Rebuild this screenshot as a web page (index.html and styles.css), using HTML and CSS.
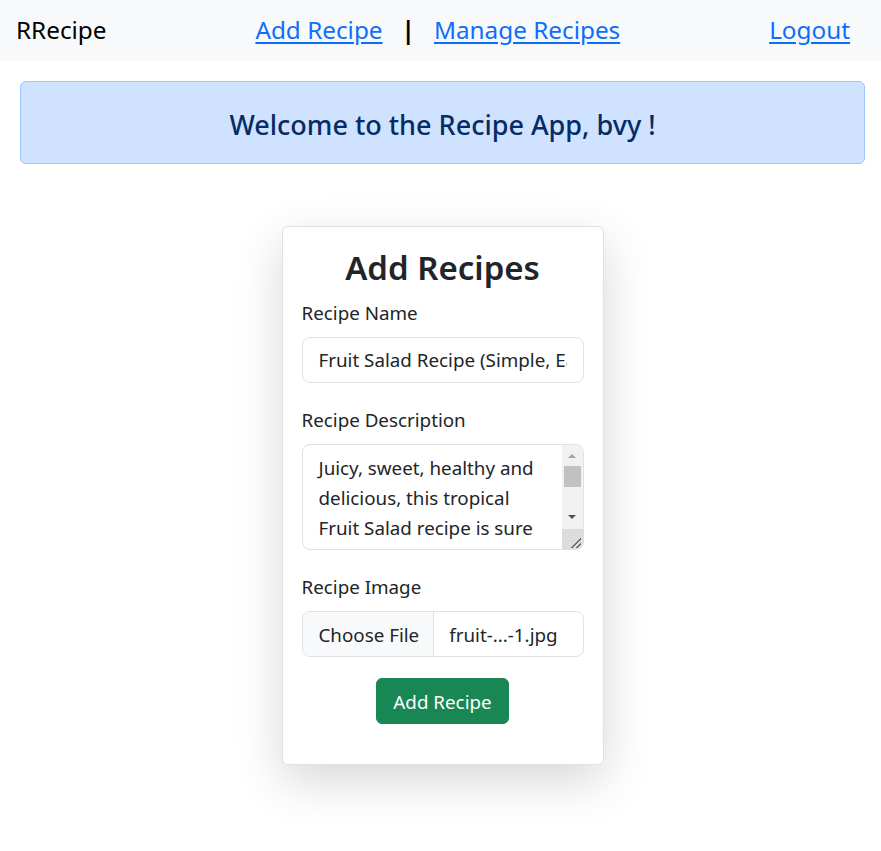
FILE: index.html
```html
<!DOCTYPE html>
<html lang="en">
<head>
<meta charset="utf-8">
<title>RRecipe</title>
<link rel="stylesheet" href="styles.css">
</head>
<body>
<nav class="navbar">
  <span class="brand">RRecipe</span>
  <div class="nav-links">
    <a href="#" class="nav-link">Add Recipe</a>
    <span class="sep">|</span>
    <a href="#" class="nav-link">Manage Recipes</a>
  </div>
  <a href="#" class="nav-link">Logout</a>
</nav>
<div class="alert">Welcome to the Recipe App, bvy !</div>
<main class="page">
  <form class="card">
    <h2 class="card-title">Add Recipes</h2>
    <div class="group">
      <label class="form-label" for="name">Recipe Name</label>
      <input class="form-control" id="name" type="text" value="Fruit Salad Recipe (Simple, Easy and Delicious)">
    </div>
    <div class="group">
      <label class="form-label" for="desc">Recipe Description</label>
      <div class="textarea-wrap">
        <textarea class="textarea" id="desc">Juicy, sweet, healthy and delicious, this tropical Fruit Salad recipe is sure to be a hit at any gathering. Made with fresh seasonal fruits like mango, pineapple, kiwi, strawberries, blueberries and grapes, all tossed together in a light honey lime dressing with a hint of fresh mint.</textarea>
        <div class="scrollbar" aria-hidden="true">
          <span class="sb-btn sb-up"></span>
          <span class="sb-track"><span class="sb-thumb"></span></span>
          <span class="sb-btn sb-down"></span>
          <span class="sb-corner"></span>
        </div>
      </div>
    </div>
    <div class="group">
      <label class="form-label">Recipe Image</label>
      <div class="file-input">
        <span class="file-btn">Choose File</span>
        <span class="file-name">fruit-...-1.jpg</span>
      </div>
    </div>
    <div class="actions">
      <button type="button" class="btn-success">Add Recipe</button>
    </div>
  </form>
</main>
</body>
</html>
```

FILE: styles.css
```css
* { box-sizing: border-box; }
html, body { margin: 0; padding: 0; }
body {
  font-family: "Noto Sans", "Open Sans", sans-serif;
  color: #212529;
  background: #fff;
}
.navbar {
  height: 61px;
  background: #f8f9fa;
  display: flex;
  align-items: center;
  justify-content: space-between;
  padding: 0 31px 2px 16px;
  font-size: 24.3px;
}
.brand { color: #000; }
.nav-links { display: flex; align-items: center; gap: 19px; }
.nav-link { color: #0d6efd; text-decoration: underline; text-underline-offset: 3px; }
.sep { color: #000; font-weight: 700; }
.alert {
  margin: 20px 16px 0 20px;
  height: 83px;
  background: #cfe2ff;
  border: 1px solid #9ec5fe;
  border-radius: 6px;
  color: #052c65;
  font-size: 27px;
  font-weight: 500;
  display: flex;
  align-items: center;
  justify-content: center;
  padding-top: 3px;
}
.page { display: flex; justify-content: center; padding: 62px 0 90px; }
.card {
  width: 322px;
  background: #fff;
  border: 1px solid #dee2e6;
  border-radius: 6px;
  box-shadow: 0 1rem 3rem rgba(0,0,0,.16);
  padding: 19px 19px 40px;
  margin-left: 4px;
}
.card-title {
  margin: 0 0 8px;
  text-align: center;
  font-size: 33px;
  line-height: 44px;
  font-weight: 600;
}
.group { margin-bottom: 22px; }
.form-label {
  display: block;
  font-size: 18.8px;
  line-height: 30px;
  margin-bottom: 9px;
}
.form-control {
  display: block;
  width: 100%;
  height: 46px;
  padding: 7px 16px;
  border: 1px solid #dee2e6;
  border-radius: 8px;
  font-family: inherit;
  font-size: 18.8px;
  line-height: 30px;
  color: #212529;
  background: #fff;
}
.textarea-wrap {
  display: flex;
  height: 106px;
  border: 1px solid #dee2e6;
  border-radius: 8px;
  overflow: hidden;
  background: #fff;
}
.textarea {
  flex: 1;
  min-width: 0;
  margin: 0;
  border: 0;
  outline: none;
  resize: none;
  overflow: hidden;
  padding: 8px 16px;
  font-family: inherit;
  font-size: 18.8px;
  line-height: 30px;
  color: #212529;
  background: transparent;
}
.scrollbar {
  width: 21px;
  flex: none;
  display: flex;
  flex-direction: column;
  background: #f1f1f1;
}
.sb-btn {
  height: 21px;
  flex: none;
  display: flex;
  justify-content: center;
}
.sb-up { align-items: flex-start; padding-top: 9px; }
.sb-up::before {
  content: "";
  border-left: 4px solid transparent;
  border-right: 4px solid transparent;
  border-bottom: 4px solid #a3a3a3;
}
.sb-down { align-items: flex-start; padding-top: 7px; }
.sb-down::before {
  content: "";
  border-left: 4px solid transparent;
  border-right: 4px solid transparent;
  border-top: 4px solid #505050;
}
.sb-track { flex: 1; padding: 0 2px 0 2px; }
.sb-thumb { display: block; height: 21px; background: #c1c1c1; }
.sb-corner {
  height: 20px;
  flex: none;
  background-color: #dcdcdc;
  background-image: linear-gradient(to bottom right,
    transparent 0 52%, #6a6a6a 52% 60%, transparent 60% 74%, #6a6a6a 74% 82%, transparent 82%);
  background-size: 11px 11px;
  background-repeat: no-repeat;
  background-position: right 2px bottom 1px;
}
.file-input {
  display: flex;
  height: 46px;
  border: 1px solid #dee2e6;
  border-radius: 8px;
  overflow: hidden;
  font-size: 18.8px;
}
.file-btn {
  display: flex;
  align-items: center;
  padding: 1px 14px 0 16px;
  background: #f8f9fa;
  border-right: 1px solid #dee2e6;
}
.file-name { display: flex; align-items: center; padding: 1px 0 0 15px; }
.actions { display: flex; justify-content: center; margin-top: -1px; }
.btn-success {
  height: 46px;
  padding: 2px 16px 0;
  background: #198754;
  color: #fff;
  border: 1px solid #198754;
  border-radius: 6px;
  font-family: inherit;
  font-size: 18.8px;
}
```
